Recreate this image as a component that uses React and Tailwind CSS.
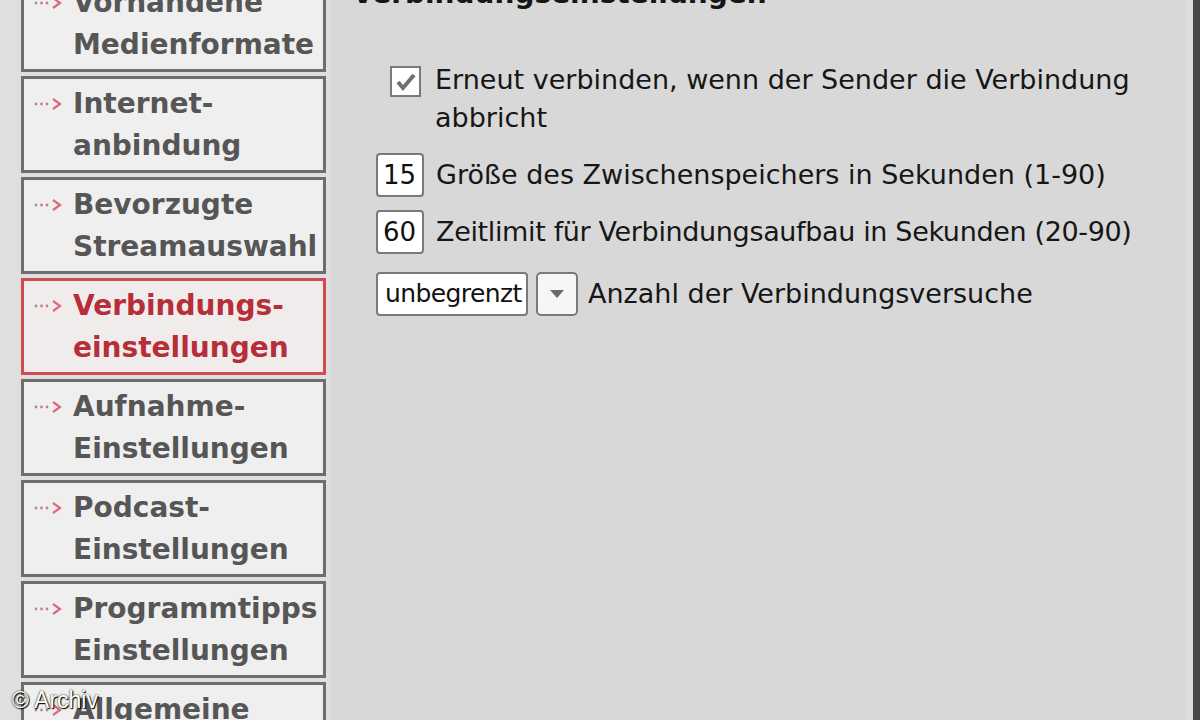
import React from "react";

const items = [
  ["Vorhandene", "Medienformate"],
  ["Internet-", "anbindung"],
  ["Bevorzugte", "Streamauswahl"],
  ["Verbindungs-", "einstellungen"],
  ["Aufnahme-", "Einstellungen"],
  ["Podcast-", "Einstellungen"],
  ["Programmtipps", "Einstellungen"],
  ["Allgemeine", "Einstellungen"],
];

function Arrow() {
  return (
    <svg width="30" height="14" viewBox="0 0 30 14" className="shrink-0">
      <circle cx="3" cy="7" r="1.4" fill="#a09294" />
      <circle cx="8.5" cy="7" r="1.4" fill="#b08890" />
      <circle cx="14" cy="7" r="1.4" fill="#c87a88" />
      <path d="M20 2 L27 7 L20 12" fill="none" stroke="#dc6a7c" strokeWidth="2.2" />
    </svg>
  );
}

function NavButton({ lines, active }) {
  return (
    <div
      className={
        active
          ? "h-[97px] shrink-0 border-[3px] border-[#d24a52] bg-[#f1ecec] flex"
          : "h-[97px] shrink-0 border-[3px] border-[#6e6e6e] bg-[#efefef] flex"
      }
    >
      <div className="pl-[9px] pt-[18px]">
        <Arrow />
      </div>
      <div
        className={
          active
            ? "pl-[10px] pt-[4px] text-[28px] leading-[42px] font-bold text-[#b52e38]"
            : "pl-[10px] pt-[4px] text-[28px] leading-[42px] font-bold text-[#565656]"
        }
      >
        <div>{lines[0]}</div>
        <div>{lines[1]}</div>
      </div>
    </div>
  );
}

function Field({ children, w, small }) {
  return (
    <div
      className={
        small
          ? `${w} h-[44px] shrink-0 bg-white border-2 border-[#7a7a7a] rounded-[4px] flex items-center px-[7px] text-[25px] tracking-[-0.6px] text-[#111]`
          : `${w} h-[44px] shrink-0 bg-white border-2 border-[#7a7a7a] rounded-[4px] flex items-center px-[5px] text-[26px] text-[#111]`
      }
    >
      {children}
    </div>
  );
}

export default function App() {
  return (
    <div
      className="relative w-[1200px] h-[720px] overflow-hidden bg-[#d8d8d8]"
      style={{ fontFamily: "'DejaVu Sans', Verdana, sans-serif" }}
    >
      <div className="flex -mt-[25px] h-[820px]">
        {/* left nav */}
        <div className="w-[330px] shrink-0 bg-[#dfdfdf] pl-[21px] pr-[4px] flex flex-col gap-[4px]">
          {items.map((l, i) => (
            <NavButton key={i} lines={l} active={i === 3} />
          ))}
        </div>

        {/* content */}
        <div className="flex-1 pl-[22px] text-[#161616]">
          <div className="text-[28px] leading-[38px] font-bold">Verbindungseinstellungen</div>

          <div className="mt-[48px] flex pl-[38px]">
            <div className="mt-[5px] w-[31px] h-[31px] shrink-0 bg-white border-2 border-[#7a7a7a] flex items-center justify-center">
              <svg width="22" height="20" viewBox="0 0 22 20">
                <path d="M3 10 L8 16 L19 3" fill="none" stroke="#707070" strokeWidth="4" />
              </svg>
            </div>
            <div className="pl-[14px] text-[27px] leading-[38px] w-[740px]">
              Erneut verbinden, wenn der Sender die Verbindung abbricht
            </div>
          </div>

          <div className="mt-[16px] pl-[24px] flex items-center gap-[12px]">
            <Field w="w-[48px]">15</Field>
            <div className="text-[27px]">Größe des Zwischenspeichers in Sekunden (1-90)</div>
          </div>

          <div className="mt-[13px] pl-[24px] flex items-center gap-[12px]">
            <Field w="w-[48px]">60</Field>
            <div className="text-[27px] tracking-[-0.35px]">Zeitlimit für Verbindungsaufbau in Sekunden (20-90)</div>
          </div>

          <div className="mt-[18px] pl-[24px] flex items-center">
            <Field w="w-[152px]" small>unbegrenzt</Field>
            <div className="ml-[8px] w-[42px] h-[44px] bg-[#f6f6f6] border-2 border-[#7a7a7a] rounded-[5px] flex items-center justify-center">
              <svg width="16" height="10" viewBox="0 0 16 10">
                <path d="M1 1 L15 1 L8 9 Z" fill="#6a6a6a" />
              </svg>
            </div>
            <div className="ml-[10px] text-[27px]">Anzahl der Verbindungsversuche</div>
          </div>
        </div>

        {/* right edge */}
        <div className="w-[8px] shrink-0 bg-[#dcdcdc]" />
        <div className="w-[7px] shrink-0 bg-[#474747]" />
      </div>

      <div
        className="absolute left-[12px] top-[683px] text-[23px] text-white"
        style={{ fontFamily: "'Liberation Sans', Arial, sans-serif", textShadow: "0 0 2px #000, 1px 1px 1px #000" }}
      >
        © Archiv
      </div>
    </div>
  );
}
